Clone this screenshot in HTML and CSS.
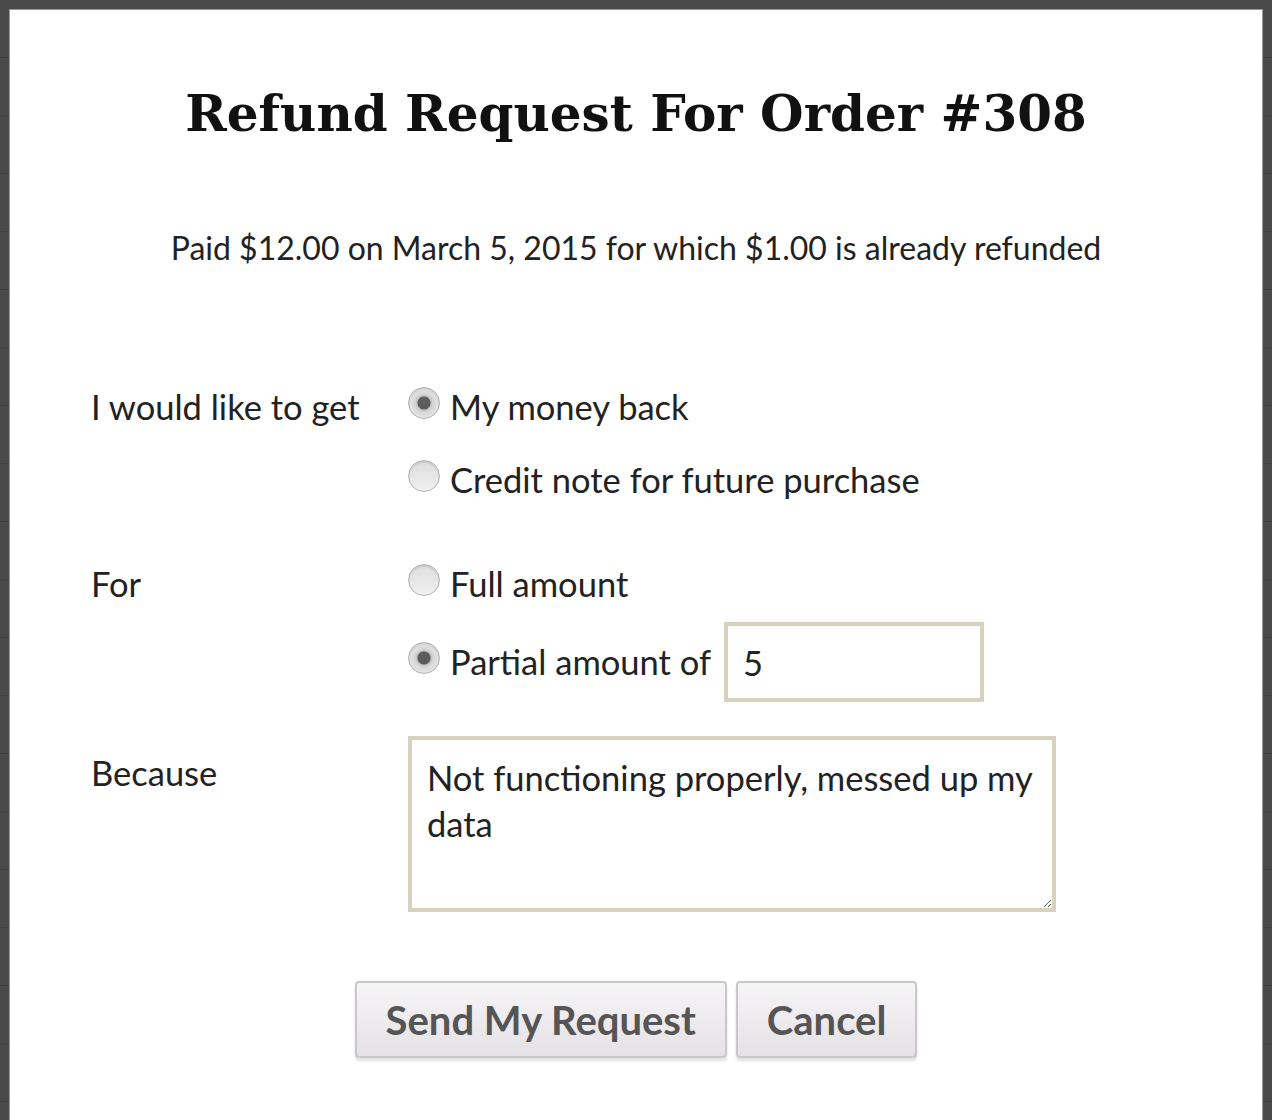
FILE: index.html
```html
<!DOCTYPE html>
<html lang="en">
<head>
    <meta charset="UTF-8">
    <meta name="viewport" content="width=device-width, initial-scale=1.0">
    <title>Refund Request</title>
    <link rel="stylesheet" href="styles.css">
</head>
<body>
    <div class="modal">
        <h1 class="modal-title">Refund Request For Order #308</h1>
        <p class="modal-summary">Paid $12.00 on March 5, 2015 for which $1.00 is already refunded</p>

        <form class="refund-form" onsubmit="return false">
            <!-- What the customer wants back -->
            <div class="form-row">
                <div class="form-label">I would like to get</div>
                <div class="form-options">
                    <label class="option"><input type="radio" name="kind" checked> My money back</label>
                    <label class="option"><input type="radio" name="kind"> Credit note for future purchase</label>
                </div>
            </div>

            <!-- How much -->
            <div class="form-row form-row-amount">
                <div class="form-label">For</div>
                <div class="form-options">
                    <label class="option"><input type="radio" name="amount"> Full amount</label>
                    <label class="option option-partial"><input type="radio" name="amount" checked> Partial amount of <input type="text" class="amount-input" value="5"></label>
                </div>
            </div>

            <!-- Reason -->
            <div class="form-row form-row-reason">
                <div class="form-label">Because</div>
                <div class="form-options">
                    <textarea class="reason-input">Not functioning properly, messed up my data</textarea>
                </div>
            </div>

            <div class="form-actions">
                <button type="submit" class="btn">Send My Request</button>
                <button type="button" class="btn">Cancel</button>
            </div>
        </form>
    </div>
</body>
</html>
```

FILE: styles.css
```css
/* Color Theme */
:root {
    --overlay-color: #4a4a4a;
    --overlay-line: #404040;
    --text-color: #222;
    --field-border: #d7d2bd;
    --button-text: #555;
    --button-border: #cbc6cc;
}

/* General Styles */
body {
    margin: 0;
    min-height: 1120px;
    font-family: Lato, "Noto Sans", sans-serif;
    color: var(--text-color);
    background-color: var(--overlay-color);
    background-image: repeating-linear-gradient(to bottom, transparent 0, transparent 57px, var(--overlay-line) 57px, var(--overlay-line) 58px);
    overflow: hidden;
}
.modal {
    margin: 9px 9px 0 9px;
    height: 1120px;
    background: #fff;
    border: 1px solid #9a9a9a;
    border-bottom: none;
    text-align: center;
}
.modal-title {
    margin: 0;
    padding-top: 74px;
    font-family: "DejaVu Serif", serif;
    font-size: 50px;
    line-height: 60px;
    font-weight: bold;
    color: #111;
}
.modal-summary {
    margin: 84px 0 0;
    font-size: 32px;
    line-height: 40px;
}

/* Form */
.refund-form {
    margin-top: 115px;
    padding-left: 81px;
    text-align: left;
    font-size: 34.5px;
}
.form-row {
    display: grid;
    grid-template-columns: 317px 1fr;
    margin-bottom: 56px;
}
.form-row-amount {
    margin-bottom: 34px;
}
.form-label {
    line-height: 48px;
}
.form-options {
    display: flex;
    flex-direction: column;
    gap: 25px;
}
.form-row-amount .form-options {
    gap: 14px;
}
.option {
    display: flex;
    align-items: center;
    gap: 10px;
    height: 48px;
    line-height: 48px;
}
.option-partial {
    height: 80px;
}
.form-row-reason .form-label {
    padding-top: 13px;
}

/* Radios */
input[type="radio"] {
    appearance: none;
    -webkit-appearance: none;
    width: 32px;
    height: 32px;
    margin: 0 0 9px 0;
    border-radius: 50%;
    border: 1px solid #b4b4b4;
    background: linear-gradient(#dcdcdc, #f2f2f2);
    box-shadow: inset 0 1px 2px rgba(0, 0, 0, 0.15);
    flex: none;
}
input[type="radio"]:checked {
    background: radial-gradient(circle, #5c5c5c 0, #5c5c5c 6px, #bdbdbd 7px, #d6d6d6 9px, #e6e6e6 15px);
}

/* Text fields */
.amount-input, .reason-input {
    font-family: inherit;
    font-size: 34.5px;
    color: var(--text-color);
    border: 4px solid var(--field-border);
    border-radius: 0;
    outline: none;
    box-sizing: border-box;
}
.amount-input {
    width: 260px;
    height: 80px;
    margin-left: 3px;
    padding: 0 15px;
}
.reason-input {
    width: 648px;
    height: 176px;
    padding: 15px 15px;
    line-height: 46px;
    resize: vertical;
    display: block;
}

/* Buttons */
.form-actions {
    display: flex;
    justify-content: center;
    gap: 9px;
    margin-top: 69px;
    padding-right: 81px;
}
.btn {
    height: 77px;
    padding: 0 29px;
    font-family: inherit;
    font-size: 40px;
    font-weight: bold;
    color: var(--button-text);
    background: linear-gradient(#f6f5f6, #e5e1e5);
    border: 2px solid var(--button-border);
    border-radius: 4px;
    box-shadow: 0 3px 3px rgba(0, 0, 0, 0.12);
    cursor: pointer;
}
```
